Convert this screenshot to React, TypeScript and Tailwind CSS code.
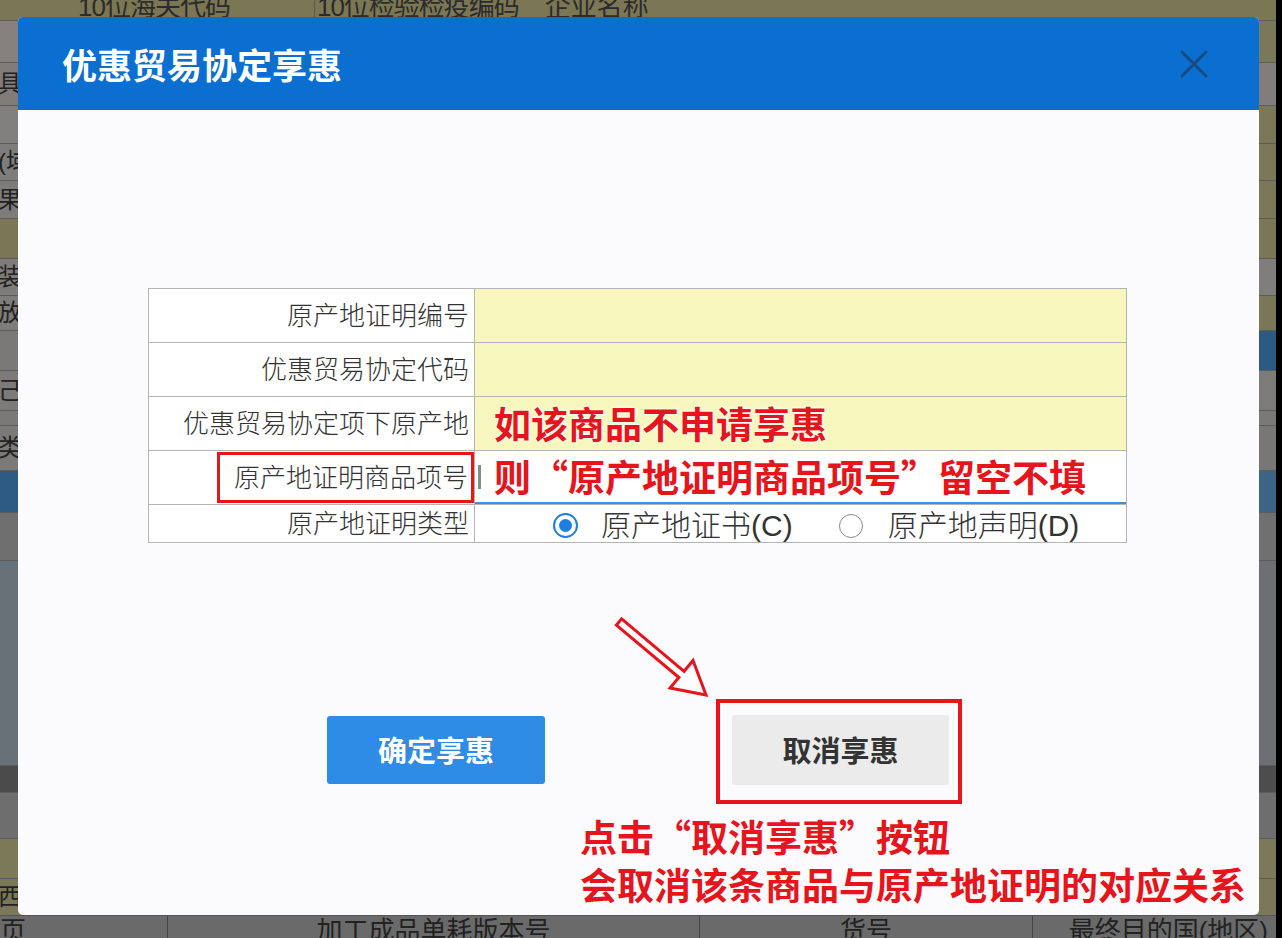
import React from "react"

// dimmed form that sits behind the dialog; only the edges peek out
const bgRows = [
  { h: "h-[20px]", left: "bg-[#7b7754]", right: "bg-[#7b7754]", text: "" },
  { h: "h-[42px]", left: "bg-[#84817e]", right: "bg-[#7b7859]", text: "" },
  { h: "h-[43px]", left: "bg-[#7f7c7a]", right: "bg-[#807d7b]", text: "具" },
  { h: "h-[38px]", left: "bg-[#81807e]", right: "bg-[#7b7858]", text: "" },
  { h: "h-[37px]", left: "bg-[#7f7d7b]", right: "bg-[#7b7857]", text: "(域" },
  { h: "h-[38px]", left: "bg-[#7e7c7a]", right: "bg-[#7b7857]", text: "果" },
  { h: "h-[40px]", left: "bg-[#7a7656]", right: "bg-[#7a7756]", text: "" },
  { h: "h-[37px]", left: "bg-[#7f7d7b]", right: "bg-[#807e7c]", text: "装" },
  { h: "h-[35px]", left: "bg-[#7f7d7b]", right: "bg-[#7a7756]", text: "放" },
  { h: "h-[40px]", left: "bg-[#7b7978]", right: "bg-[#2c5a82]", text: "" },
  { h: "h-[40px]", left: "bg-[#7d7b79]", right: "bg-[#7d7b79]", text: "己" },
  { h: "h-[15px]", left: "bg-[#7b7978]", right: "bg-[#7b7978]", text: "" },
  { h: "h-[45px]", left: "bg-[#7b7a79]", right: "bg-[#787776]", text: "类" },
  { h: "h-[42px]", left: "bg-[#2e5b82]", right: "bg-[#3d6386]", text: "" },
  { h: "h-[48px]", left: "bg-[#6f6f6f]", right: "bg-[#707070]", text: "" },
  { h: "h-[205px]", left: "bg-[#687178]", right: "bg-[#6d6f72]", text: "" },
  { h: "h-[27px]", left: "bg-[#4b4b4b]", right: "bg-[#4d4d4d]", text: "" },
  { h: "h-[46px]", left: "bg-[#6e6e6e]", right: "bg-[#6e6e6e]", text: "" },
  { h: "h-[40px]", left: "bg-[#7b7957]", right: "bg-[#7b7957]", text: "" },
  { h: "h-[37px]", left: "bg-[#7a7858]", right: "bg-[#7a7858]", text: "西" },
]

function Arrow() {
  return (
    <svg
      className="absolute left-[592px] top-[502px] w-[110px] h-[95px] pointer-events-none"
      viewBox="610 612 110 95"
    >
      <polygon
        points="616.4,625.1 678.9,677.5 670,688 706,695 693,660.5 684.1,671.3 621.6,618.9"
        fill="#fff"
        stroke="#e8141c"
        strokeWidth="3"
        strokeLinejoin="miter"
      />
    </svg>
  )
}

export default function App() {
  const label =
    "font-['Liberation_Sans','Noto_Sans_CJK_SC',sans-serif] text-[26px] font-light text-[#333] leading-none"
  const radioLabel =
    "font-['Liberation_Sans','Noto_Sans_CJK_SC',sans-serif] text-[30px] font-light text-[#333] leading-none"
  const note =
    "font-['Noto_Sans_CJK_SC',sans-serif] text-[37px] font-bold text-[#e8141c] leading-none whitespace-nowrap [text-shadow:0_0_3px_#fff,0_0_3px_#fff,0_0_2px_#fff]"

  return (
    <div className="relative w-[1282px] h-[938px] overflow-hidden bg-[#6e6e6e] font-['Liberation_Sans','Noto_Sans_CJK_SC',sans-serif]">
      {/* background page */}
      <div className="flex w-[1276px] h-full flex-col">
        <div className="flex h-[20px] shrink-0 items-end overflow-hidden bg-[#7b7754] text-[26px] leading-[26px] text-[#2b2b2b]">
          <span className="ml-[78px] h-[26px] shrink-0 tracking-[-1px]">10位海关代码</span>
          <span className="ml-[84px] h-[20px] border-l border-[#5a5a4a]" />
          <span className="ml-[2px] h-[26px] shrink-0 tracking-[-1px]">10位检验检疫编码</span>
          <span className="ml-[26px] h-[26px] shrink-0">企业名称</span>
        </div>
        {bgRows.slice(1).map((r, i) => (
          <div key={i} className={`flex shrink-0 border-t border-[#5c5c58] ${r.h}`}>
            <div className={`w-[640px] flex items-center text-[24px] text-[#222] ${r.left}`}>
              <span className="ml-[-2px]">{r.text}</span>
            </div>
            <div className={`flex-1 ${r.right}`} />
          </div>
        ))}
        <div className="flex h-[23px] shrink-0 border-t border-[#555] bg-[#6a6a6a] text-[26px] leading-[26px] text-[#222]">
          <div className="w-[168px] border-r border-[#444] pt-[2px]">页</div>
          <div className="flex w-[532px] justify-center border-r border-[#444] pt-[2px]">加工成品单耗版本号</div>
          <div className="flex w-[333px] justify-center border-r border-[#444] pt-[2px]">货号</div>
          <div className="flex flex-1 justify-end pr-[8px] pt-[2px]">最终目的国(地区)</div>
        </div>
      </div>
      <div className="absolute right-0 top-0 h-full w-[6px] bg-black" />

      {/* dialog */}
      <div className="absolute left-[18px] top-[17px] flex h-[898px] w-[1241px] flex-col overflow-hidden rounded-[5px] bg-[#fbfbfd]">
        <div className="flex h-[93px] shrink-0 items-center justify-between bg-[#0b6fd2] pl-[44px] pr-[50px]">
          <span className="font-['Noto_Sans_CJK_SC',sans-serif] text-[35px] font-bold leading-none text-white">
            优惠贸易协定享惠
          </span>
          <svg width="30" height="30" viewBox="0 0 30 30">
            <path d="M3 3 L27 27 M27 3 L3 27" stroke="#1b4a80" strokeWidth="3" strokeLinecap="round" />
          </svg>
        </div>

        <div className="relative flex flex-1 flex-col pl-[130px] pt-[178px]">
          {/* form table */}
          <div className="w-[979px] border border-[#b4b4b4] bg-white">
            <div className="flex h-[54px] border-b border-[#b4b4b4]">
              <div className={`flex w-[326px] items-center justify-end border-r border-[#b4b4b4] pr-[5px] ${label}`}>原产地证明编号</div>
              <div className="flex-1 bg-[#f7f7bd]" />
            </div>
            <div className="flex h-[54px] border-b border-[#b4b4b4]">
              <div className={`flex w-[326px] items-center justify-end border-r border-[#b4b4b4] pr-[5px] ${label}`}>优惠贸易协定代码</div>
              <div className="flex-1 bg-[#f7f7bd]" />
            </div>
            <div className="flex h-[54px] border-b border-[#b4b4b4]">
              <div className={`flex w-[326px] items-center justify-end border-r border-[#b4b4b4] pr-[5px] ${label}`}>优惠贸易协定项下原产地</div>
              <div className="flex flex-1 items-center bg-[#f7f7bd] pl-[19px]">
                <span className={note}>如该商品不申请享惠</span>
              </div>
            </div>
            <div className="flex h-[54px] border-b border-[#b4b4b4]">
              <div className="flex w-[326px] items-center justify-end border-r border-[#b4b4b4]">
                <div className={`flex h-[51px] w-[257px] items-center justify-end border-[3px] border-[#e8141c] pr-[3px] ${label}`}>
                  原产地证明商品项号
                </div>
              </div>
              <div className="flex flex-1 items-center border-b-2 border-[#3f8fdc] bg-white">
                <div className="ml-[3px] h-[24px] w-[3px] bg-[#8a8a8a]" />
                <span className={`ml-[13px] ${note}`}>则“原产地证明商品项号”留空不填</span>
              </div>
            </div>
            <div className="flex h-[37px]">
              <div className={`flex w-[326px] items-center justify-end border-r border-[#b4b4b4] pr-[5px] ${label}`}>原产地证明类型</div>
              <div className="flex flex-1 items-center pl-[78px] pt-[4px]">
                <span className="flex h-[25px] w-[25px] shrink-0 items-center justify-center rounded-full border-2 border-[#1e7fe0] bg-white">
                  <span className="h-[13px] w-[13px] rounded-full bg-[#1e7fe0]" />
                </span>
                <span className={`ml-[23px] ${radioLabel}`}>原产地证书(C)</span>
                <span className="ml-[46px] h-[24px] w-[24px] shrink-0 rounded-full border border-[#8a8a8a] bg-white" />
                <span className={`ml-[25px] ${radioLabel}`}>原产地声明(D)</span>
              </div>
            </div>
          </div>

          {/* buttons */}
          <div className="mt-[156px] flex items-start">
            <button className="ml-[179px] mt-[17px] flex h-[68px] w-[218px] items-center justify-center rounded-[3px] bg-[#2f8ce6] font-['Noto_Sans_CJK_SC',sans-serif] text-[29px] font-bold text-white">
              确定享惠
            </button>
            <div className="ml-[171px] h-[105px] w-[246px] border-[4px] border-[#e8141c] pl-[12px] pt-[12px]">
              <button className="flex h-[70px] w-[217px] items-center justify-center rounded-[2px] bg-[#ebebeb] font-['Noto_Sans_CJK_SC',sans-serif] text-[29px] font-bold text-[#333]">
                取消享惠
              </button>
            </div>
          </div>

          {/* annotation */}
          <div className="ml-[432px] mt-[14px] flex flex-col gap-[11px] font-['Noto_Sans_CJK_SC',sans-serif] text-[37px] font-bold leading-[37px] text-[#e8141c]">
            <span>点击“取消享惠”按钮</span>
            <span>会取消该条商品与原产地证明的对应关系</span>
          </div>

          <Arrow />
        </div>
      </div>
    </div>
  )
}
